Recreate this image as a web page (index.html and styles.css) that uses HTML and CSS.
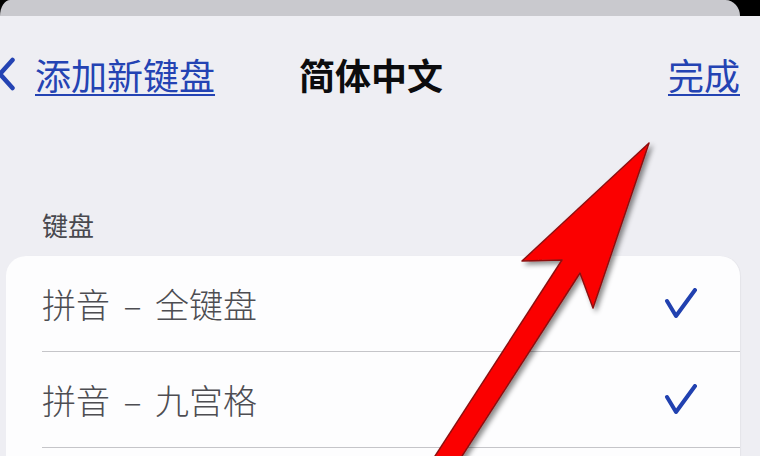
FILE: index.html
```html
<!DOCTYPE html>
<html lang="zh-CN">
<head>
<meta charset="utf-8">
<title>简体中文</title>
<link rel="stylesheet" href="styles.css">
</head>
<body>
<div class="screen">
  <div class="peek"></div>
  <div class="sheet">
    <div class="nav">
      <svg class="chevron" width="17" height="34" viewBox="0 0 17 34"><path d="M14.5 3 L2 17 L14.5 31" fill="none" stroke="#2443b3" stroke-width="4.5" stroke-linecap="round" stroke-linejoin="round"/></svg>
      <a class="link back">添加新键盘</a>
      <span class="title">简体中文</span>
      <span class="spacer"></span>
      <a class="link done">完成</a>
    </div>
    <div class="section-label">键盘</div>
    <div class="card">
      <div class="row">
        <span class="row-text">拼音 – 全键盘</span>
        <svg class="check" width="34" height="32" viewBox="0 0 34 32"><path d="M3 13 L12 28 L31 2" fill="none" stroke="#2141b0" stroke-width="4" stroke-linecap="round" stroke-linejoin="round"/></svg>
      </div>
      <div class="row">
        <span class="row-text">拼音 – 九宫格</span>
        <svg class="check" width="34" height="32" viewBox="0 0 34 32"><path d="M3 13 L12 28 L31 2" fill="none" stroke="#2141b0" stroke-width="4" stroke-linecap="round" stroke-linejoin="round"/></svg>
      </div>
    </div>
  </div>
  <svg class="arrow" width="760" height="456" viewBox="0 0 760 456">
    <defs>
      <filter id="sh" x="-20%" y="-20%" width="140%" height="140%">
        <feDropShadow dx="3" dy="3" stdDeviation="2.5" flood-color="#000" flood-opacity="0.45"/>
      </filter>
    </defs>
    <polygon points="649,143 593,308 580,273 453,470 426,470 562,260 522,261" fill="#fb0606" stroke="#8e0c0c" stroke-width="1.5" stroke-linejoin="round" filter="url(#sh)"/>
  </svg>
</div>
</body>
</html>
```
FILE: styles.css
```css
html, body {
  margin: 0;
  padding: 0;
  background: #000;
}
body {
  font-family: "Noto Sans CJK SC", "Noto Sans", sans-serif;
  width: 760px;
  height: 456px;
  overflow: hidden;
}
.screen {
  position: relative;
  width: 760px;
  height: 456px;
  display: flex;
  flex-direction: column;
  overflow: hidden;
}
.peek {
  height: 16px;
  margin: 0 20px 0 0;
  background: #c9c9ce;
  border-top-left-radius: 14px 22px;
  border-top-right-radius: 20px 22px;
  flex: none;
}
.sheet {
  flex: 1;
  min-height: 0;
  background: #eeeef3;
  display: flex;
  flex-direction: column;
}
.nav {
  display: flex;
  align-items: center;
  height: 40px;
  margin-top: 38px;
  line-height: 40px;
}
.chevron {
  margin-left: -2px;
  margin-right: 20px;
  flex: none;
}
.link {
  color: #2443b3;
  font-size: 36px;
  text-decoration: underline;
  text-decoration-thickness: 2px;
  text-underline-offset: 4px;
}
.title {
  margin-left: 84px;
  font-size: 36px;
  font-weight: 700;
  color: #0c0c0e;
}
.spacer {
  flex: 1;
}
.done {
  margin-right: 20px;
}
.section-label {
  margin-top: 116px;
  margin-left: 42px;
  font-size: 26px;
  line-height: 30px;
  color: #48484e;
}
.card {
  margin: 16px 20px 0 6px;
  background: #fdfdfe;
  border-radius: 20px 20px 0 0;
  flex: 1;
  box-shadow: 1px 0 1px rgba(0,0,0,0.04);
}
.row {
  display: flex;
  align-items: center;
  justify-content: space-between;
  height: 95px;
  margin-left: 36px;
  padding-right: 42px;
  border-bottom: 1.5px solid #c5c5c9;
}
.row-text {
  font-size: 34px;
  font-weight: 300;
  color: #4d4d52;
  word-spacing: 6px;
}
.check {
  flex: none;
}
.arrow {
  position: absolute;
  left: 0;
  top: 0;
  pointer-events: none;
}
```
